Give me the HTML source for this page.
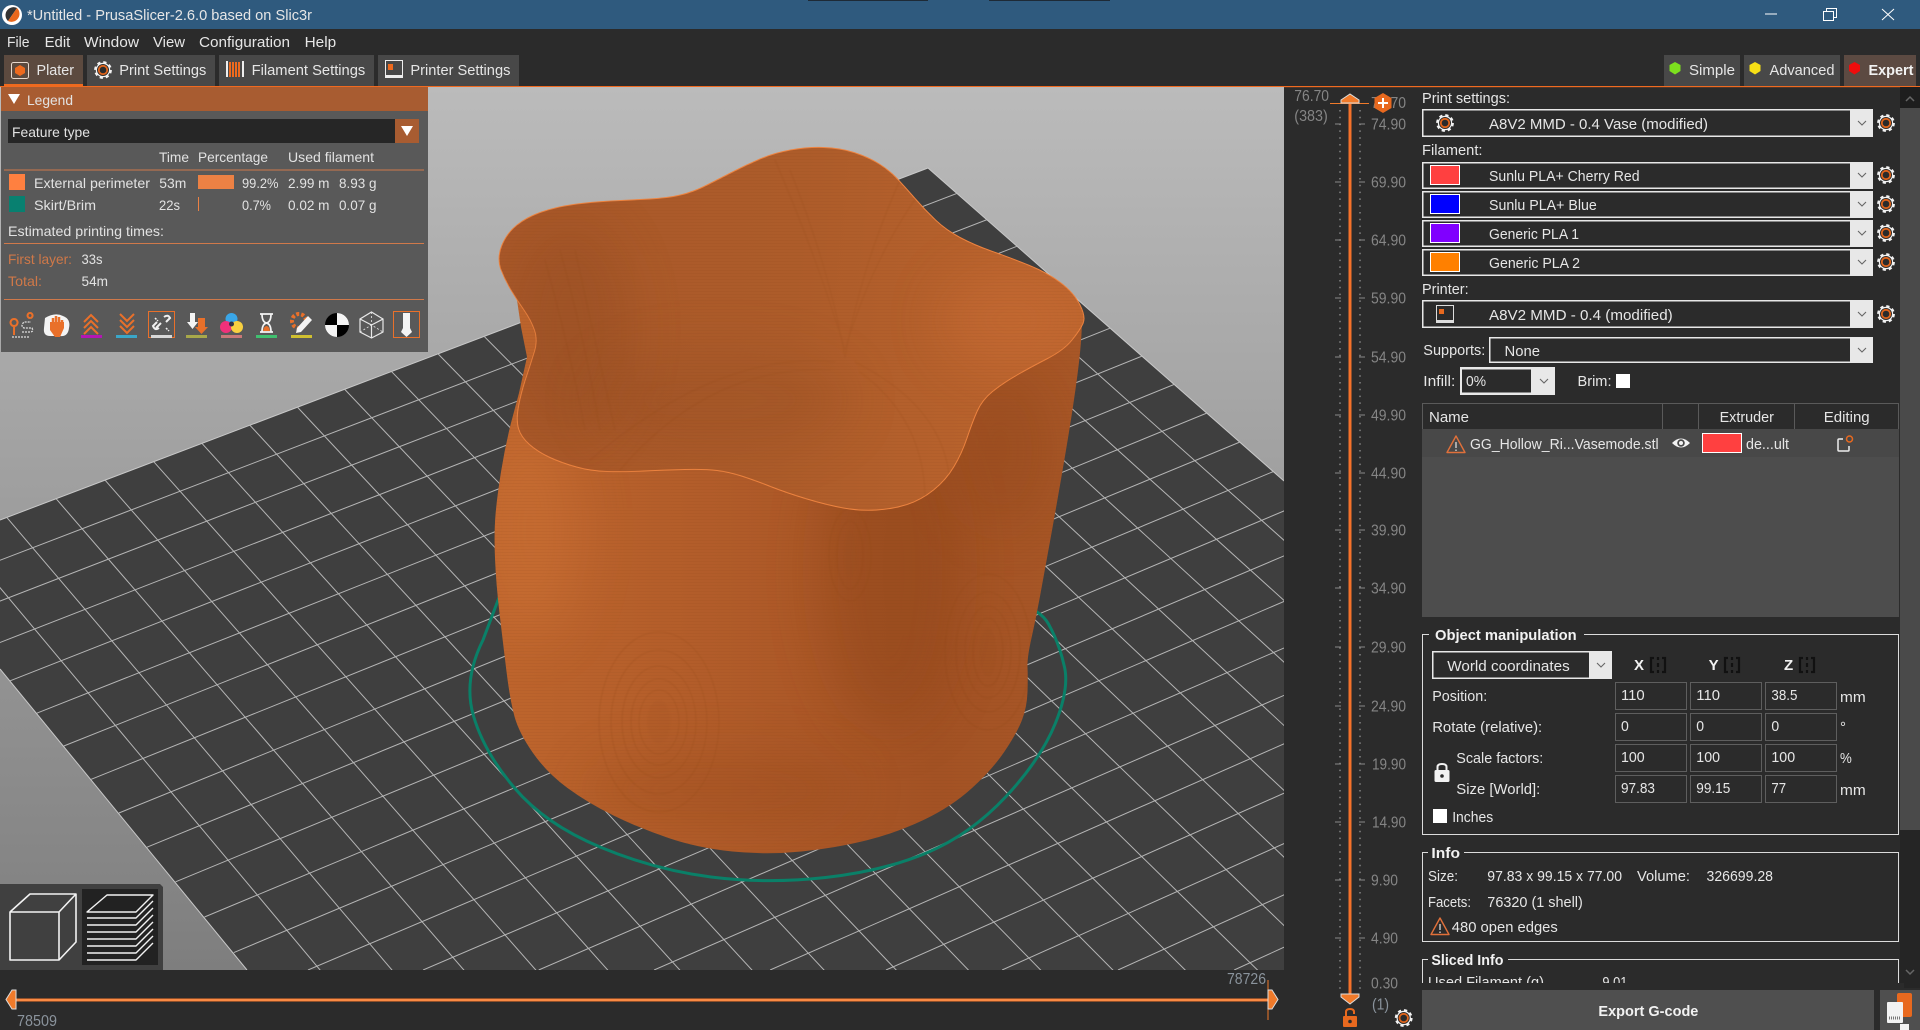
<!DOCTYPE html>
<html lang="en">
<head>
<meta charset="utf-8">
<title>PrusaSlicer</title>
<style>
html,body{margin:0;padding:0;background:#2b2b2b;width:1920px;height:1030px;overflow:hidden}
svg{display:block}
text{font-family:"Liberation Sans",sans-serif;font-size:15px;fill:#e6e6e6;white-space:pre}
.l text{font-size:14px;fill:#e2e2e2}
.r text{font-size:15.5px;fill:#858585}
.b{font-weight:700;fill:#f2f2f2}
</style>
</head>
<body>
<svg width="1920" height="1030" viewBox="0 0 1920 1030" xmlns="http://www.w3.org/2000/svg">
<defs>
<linearGradient id="bg" x1="0" y1="87" x2="0" y2="970" gradientUnits="userSpaceOnUse"><stop offset="0" stop-color="#bbbbbb"/><stop offset="1" stop-color="#7e7e7e"/></linearGradient>
<linearGradient id="body" x1="494" y1="0" x2="1082" y2="0" gradientUnits="userSpaceOnUse"><stop offset="0" stop-color="#be652d"/><stop offset=".42" stop-color="#b05b29"/><stop offset=".75" stop-color="#a35224"/><stop offset="1" stop-color="#a85727"/></linearGradient>
<linearGradient id="inner" x1="500" y1="300" x2="1080" y2="350" gradientUnits="userSpaceOnUse"><stop offset="0" stop-color="#a95829"/><stop offset=".5" stop-color="#ad5c2a"/><stop offset="1" stop-color="#bd652e"/></linearGradient>
<pattern id="fine" width="3" height="3" patternUnits="userSpaceOnUse"><path d="M0 0H3" stroke="#7a3d14" stroke-width="1" opacity=".16"/></pattern>
<filter id="soft" x="-60%" y="-60%" width="220%" height="220%"><feGaussianBlur stdDeviation="26"/></filter>
<filter id="lite" x="-10%" y="-10%" width="120%" height="120%"><feGaussianBlur stdDeviation=".6"/></filter>
<clipPath id="cv"><rect x="0" y="87" width="1284" height="883"/></clipPath>
<clipPath id="bed"><polygon points="0,520 928,168 1284,481 1284,970 247,970 0,669"/></clipPath>
<clipPath id="bd"><path d="M517 300L521 327L527 357L519 393L511 423Q505 447 501 472Q497 497 495.5 515Q494 533 495 558Q496 583 499.5 613Q503 643 506.5 671.5Q510 700 514.5 716.5Q519 733 533 753Q547 773 567.5 788Q588 803 613.5 815.5Q639 828 668.5 838Q698 848 732.5 851.500Q767 855 801.5 851.500Q836 848 866 840.5Q896 833 923.5 820Q951 807 971.5 788.5Q992 770 1004.5 751.5Q1017 733 1022 720Q1027 707 1027.5 692Q1028 677 1027.5 667.5Q1027 658 1031.5 638Q1036 618 1039.5 599Q1043 580 1050 541.5Q1057 503 1065 456Q1073 409 1077.5 374.5Q1082 340 1082 317L800 300Z"/></clipPath>
<clipPath id="rm"><path d="M500.500 268.500Q497 257 502 245Q507 233 517 225Q527 217 541.5 212Q556 207 573.5 204.5Q591 202 611 201Q631 200 649.5 199Q668 198 680.5 195Q693 192 705 186Q717 180 731.5 172.5Q746 165 760 159Q774 153 790.5 150Q807 147 823.5 147.5Q840 148 854 152.5Q868 157 878.5 163.5Q889 170 897 178.5Q905 187 915 198.5Q925 210 935.5 220Q946 230 960 237.5Q974 245 992.5 251.5Q1011 258 1029.5 265.5Q1048 273 1061 283Q1074 293 1080 305Q1086 317 1083 323.5Q1080 330 1072 340Q1064 350 1047.5 358.5Q1031 367 1017 375Q1003 383 992.5 391.5Q982 400 977 411.5Q972 423 967 438Q962 453 954 466.5Q946 480 933.5 490Q921 500 907 504.5Q893 509 876.5 510Q860 511 843.5 508Q827 505 807 499Q787 493 770.5 486.5Q754 480 741.5 476Q729 472 717 470.5Q705 469 684.5 469.5Q664 470 643.5 471Q623 472 607 471.5Q591 471 576.5 467Q562 463 550 457.5Q538 452 529.5 444.5Q521 437 518.5 428.5Q516 420 518.5 406.5Q521 393 526 378Q531 363 534.5 351.5Q538 340 534.5 330Q531 320 524 310Q517 300 511 290Q505 280 500.500 268.500Z"/></clipPath>
<clipPath id="sl"><rect x="1422" y="955" width="478" height="28"/></clipPath>
<g id="gear"><circle r="7.7" fill="none" stroke="#f2f2f2" stroke-width="2.4" stroke-dasharray="3.2 2.85"/><circle r="6.6" fill="#2b2b2b" stroke="#f2f2f2" stroke-width="1.2"/><circle r="4.2" fill="none" stroke="#e0651c" stroke-width="1.8"/></g>
<g id="chev"><polyline points="-4,-2 0,2 4,-2" fill="none" stroke="#666" stroke-width="1.1"/></g>
<g id="warn"><path d="M0 -9L9 7.5H-9Z" fill="none" stroke="#e0703a" stroke-width="1.4" stroke-linejoin="round"/><path d="M0 -3V3M0 4.5V6" stroke="#e9e9e9" stroke-width="1.2"/></g>
<g id="sync"><path d="M-4 -7H-7V7H-4M4 -7H7V7H4M0 -8V-5M0 -2V2M0 5V8" fill="none" stroke="#111" stroke-width="2.2"/></g>
</defs>

<!-- chrome -->
<rect width="1920" height="1030" fill="#2b2b2b"/>
<rect width="1920" height="29" fill="#2f5a7e"/>
<rect x="808" y="0" width="120" height="1" fill="#1e2a36"/><rect x="989" y="0" width="121" height="1" fill="#1e2a36"/>
<circle cx="12" cy="15" r="10" fill="#fff"/><path d="M17 8L8 21A8 8 0 0 1 17 8Z" fill="#333"/><path d="M17 8A8 8 0 0 1 8 21Z" fill="#e9671c"/>
<text x="27" y="20" textLength="285" lengthAdjust="spacingAndGlyphs">*Untitled - PrusaSlicer-2.6.0 based on Slic3r</text>
<path d="M1765 14H1777" stroke="#fff" stroke-width="1"/>
<path d="M1823.500 11.500h10v9h-10zM1826.500 11.500v-3h10v9h-3" fill="none" stroke="#fff" stroke-width="1"/>
<path d="M1882 9L1894 20M1894 9L1882 20" stroke="#fff" stroke-width="1"/>

<text x="7" y="47" textLength="22.500" lengthAdjust="spacingAndGlyphs">File</text>
<text x="44.600" y="47" textLength="25.700" lengthAdjust="spacingAndGlyphs">Edit</text>
<text x="84" y="47" textLength="55" lengthAdjust="spacingAndGlyphs">Window</text>
<text x="153" y="47" textLength="32" lengthAdjust="spacingAndGlyphs">View</text>
<text x="199" y="47" textLength="91" lengthAdjust="spacingAndGlyphs">Configuration</text>
<text x="304.600" y="47" textLength="31.600" lengthAdjust="spacingAndGlyphs">Help</text>

<!-- tabs -->
<rect x="4" y="55" width="79" height="31" fill="#5c4a3f"/><rect x="4" y="84" width="79" height="2" fill="#ee6a1e"/>
<rect x="87" y="55" width="128" height="31" fill="#484848"/>
<rect x="219" y="55" width="155" height="31" fill="#484848"/>
<rect x="378" y="55" width="141" height="31" fill="#484848"/>
<rect x="11.500" y="62.500" width="17" height="16" rx="2" fill="#5c4a3f" stroke="#e8d8cc" stroke-width="1"/><path d="M20 65L25 68V73L20 76L15 73V68Z" fill="#ee6a1e"/>
<text x="36.500" y="75" textLength="37.500" lengthAdjust="spacingAndGlyphs">Plater</text>
<use href="#gear" x="103" y="70"/>
<text x="119.300" y="75" textLength="87" lengthAdjust="spacingAndGlyphs">Print Settings</text>
<path d="M227 61V77M243 61V77" stroke="#eee" stroke-width="2"/><path d="M230 62V77M233 62V77M236 62V77M239 62V77" stroke="#ee6a1e" stroke-width="2"/>
<text x="251.600" y="75" textLength="113.700" lengthAdjust="spacingAndGlyphs">Filament Settings</text>
<rect x="385.500" y="60.500" width="17" height="17" fill="none" stroke="#eee" stroke-width="1"/><rect x="385" y="75" width="18" height="3" fill="#eee"/><rect x="388" y="64" width="5" height="6" fill="#ee6a1e"/>
<text x="410.400" y="75" textLength="100" lengthAdjust="spacingAndGlyphs">Printer Settings</text>

<rect x="1664" y="55" width="76" height="31" fill="#484848"/>
<rect x="1744" y="55" width="96" height="31" fill="#484848"/>
<rect x="1844" y="55" width="72" height="31" fill="#5c4a42"/>
<path d="M1675 62L1680.500 65V71L1675 74.500L1669.500 71V65Z" fill="#7ce01e"/>
<path d="M1755 62L1760.500 65V71L1755 74.500L1749.500 71V65Z" fill="#f8e016"/>
<path d="M1854.500 62L1860 65V71L1854.500 74.500L1849 71V65Z" fill="#f00c0c"/>
<text x="1689" y="75" textLength="46" lengthAdjust="spacingAndGlyphs">Simple</text>
<text x="1769.500" y="75" textLength="65" lengthAdjust="spacingAndGlyphs">Advanced</text>
<text x="1868.500" y="75" textLength="45" lengthAdjust="spacingAndGlyphs" class="b">Expert</text>
<rect y="86" width="1920" height="1.200" fill="#f06a20"/>

<!-- 3D canvas -->
<g clip-path="url(#cv)">
<rect x="0" y="87" width="1284" height="883" fill="url(#bg)"/>
<polygon points="0,520 928,168 1284,481 1284,970 247,970 0,669" fill="#3f3f3f"/>
<path d="M0 520L928 168L1284 481M0 669L247 970" fill="none" stroke="#c8c8c8" stroke-width="1"/>
<g clip-path="url(#bed)" stroke="#b5b5b5" stroke-width="1" fill="none">
<path d="M-43 536.300L345.200 1000M6.800 517.400L417.500 1000M56.100 498.700L489.800 1000M105 480.100L562.200 1000M153.600 461.600L634.500 1000M201.900 443.300L707 1000M249.800 425.100L779.600 1000M297.300 407L852.100 1000M344.500 389.100L924.700 1000M391.300 371.300L997.300 1000M437.800 353.600L1070 1000M483.900 336.100L1142.600 1000M529.800 318.700L1215.400 1000M575.200 301.400L1288.100 1000M620.400 284.200L1361 1000M665.200 267.200L1433.800 1000M709.800 250.300L1506.700 1000M754 233.500L1579.700 1000M797.900 216.800L1652.700 1000M841.500 200.200L1725.800 1000M884.800 183.800L1798.800 1000"/>
<path d="M-67.700 586.200L1300 61.900M-42.100 617.300L1300 98.700M-16.200 648.800L1300 136M10.100 680.800L1300 174.100M36.800 713.200L1300 212.900M63.800 746L1300 252.300M91.200 779.300L1300 292.500M118.900 813L1300 333.300M147 847.200L1300 374.900M175.600 881.800L1300 417.200M204.500 917L1300 460.400M233.800 952.600L1300 504.200M308 970L1300 549.100M423.100 970L1300 594.600M538.700 970L1300 641.100M654.100 970L1300 688.400M770.100 970L1300 736.800M886 970L1300 786.100M1002.100 970L1300 836.400M1118 970L1300 887.600M1234.200 970L1300 939.900"/>
</g>
<!-- skirt -->
<path d="M500 595L483 640Q463 680 473.500 716Q484 752 514.500 788Q545 824 600 847Q655 870 711 877Q767 884 825.500 877.500Q884 871 927.500 852.500Q971 834 1006 796.500Q1041 759 1055.500 723Q1070 687 1064 665Q1059 643 1048.500 624Q1038 605 1000 600" fill="none" stroke="#0a8068" stroke-width="3"/>
<!-- vase body -->
<path d="M517 300L521 327L527 357L519 393L511 423Q505 447 501 472Q497 497 495.5 515Q494 533 495 558Q496 583 499.5 613Q503 643 506.5 671.5Q510 700 514.5 716.5Q519 733 533 753Q547 773 567.5 788Q588 803 613.5 815.5Q639 828 668.5 838Q698 848 732.5 851.500Q767 855 801.5 851.500Q836 848 866 840.5Q896 833 923.5 820Q951 807 971.5 788.5Q992 770 1004.5 751.5Q1017 733 1022 720Q1027 707 1027.5 692Q1028 677 1027.5 667.5Q1027 658 1031.5 638Q1036 618 1039.5 599Q1043 580 1050 541.5Q1057 503 1065 456Q1073 409 1077.5 374.5Q1082 340 1082 317L800 300Z" fill="url(#body)"/>
<g clip-path="url(#bd)">
<ellipse cx="890" cy="570" rx="70" ry="160" fill="#8a4316" opacity=".38" filter="url(#soft)"/>
<ellipse cx="1000" cy="450" rx="50" ry="80" fill="#8a4316" opacity=".3" filter="url(#soft)"/>
<ellipse cx="530" cy="530" rx="50" ry="110" fill="#d27639" opacity=".4" filter="url(#soft)"/>
<ellipse cx="720" cy="790" rx="140" ry="40" fill="#8a4316" opacity=".22" filter="url(#soft)"/>
<g fill="none" stroke="#8c4718" stroke-width="1" opacity=".2" filter="url(#lite)">
<ellipse cx="659" cy="722" rx="12" ry="22" fill="#a85828" stroke="none"/>
<ellipse cx="659" cy="722" rx="20" ry="32"/><ellipse cx="659" cy="722" rx="28" ry="43"/><ellipse cx="659" cy="722" rx="37" ry="56"/><ellipse cx="659" cy="722" rx="48" ry="72"/><ellipse cx="659" cy="722" rx="60" ry="90"/>
<ellipse cx="988" cy="652" rx="8" ry="24" fill="#9a4f22" stroke="none"/>
<ellipse cx="988" cy="652" rx="15" ry="34"/><ellipse cx="988" cy="652" rx="23" ry="46"/><ellipse cx="988" cy="652" rx="32" ry="60"/><ellipse cx="988" cy="652" rx="43" ry="78"/>
<ellipse cx="850" cy="555" rx="6" ry="24" fill="#9a4f22" stroke="none"/><ellipse cx="850" cy="555" rx="13" ry="34"/><ellipse cx="850" cy="555" rx="21" ry="46"/>
</g>
</g>
<path d="M517 300L521 327L527 357L519 393L511 423Q505 447 501 472Q497 497 495.5 515Q494 533 495 558Q496 583 499.5 613Q503 643 506.5 671.5Q510 700 514.5 716.5Q519 733 533 753Q547 773 567.5 788Q588 803 613.5 815.5Q639 828 668.5 838Q698 848 732.5 851.500Q767 855 801.5 851.500Q836 848 866 840.5Q896 833 923.5 820Q951 807 971.5 788.5Q992 770 1004.5 751.5Q1017 733 1022 720Q1027 707 1027.5 692Q1028 677 1027.5 667.5Q1027 658 1031.5 638Q1036 618 1039.5 599Q1043 580 1050 541.5Q1057 503 1065 456Q1073 409 1077.5 374.5Q1082 340 1082 317L800 300Z" fill="url(#fine)"/>
<!-- vase interior -->
<path d="M500.500 268.500Q497 257 502 245Q507 233 517 225Q527 217 541.5 212Q556 207 573.5 204.5Q591 202 611 201Q631 200 649.5 199Q668 198 680.5 195Q693 192 705 186Q717 180 731.5 172.5Q746 165 760 159Q774 153 790.5 150Q807 147 823.5 147.5Q840 148 854 152.5Q868 157 878.5 163.5Q889 170 897 178.5Q905 187 915 198.5Q925 210 935.5 220Q946 230 960 237.5Q974 245 992.5 251.5Q1011 258 1029.5 265.5Q1048 273 1061 283Q1074 293 1080 305Q1086 317 1083 323.5Q1080 330 1072 340Q1064 350 1047.5 358.5Q1031 367 1017 375Q1003 383 992.5 391.5Q982 400 977 411.5Q972 423 967 438Q962 453 954 466.5Q946 480 933.5 490Q921 500 907 504.5Q893 509 876.5 510Q860 511 843.5 508Q827 505 807 499Q787 493 770.5 486.5Q754 480 741.5 476Q729 472 717 470.5Q705 469 684.5 469.5Q664 470 643.5 471Q623 472 607 471.5Q591 471 576.5 467Q562 463 550 457.5Q538 452 529.5 444.5Q521 437 518.5 428.5Q516 420 518.5 406.5Q521 393 526 378Q531 363 534.5 351.5Q538 340 534.5 330Q531 320 524 310Q517 300 511 290Q505 280 500.500 268.500Z" fill="url(#inner)" stroke="#ee8440" stroke-width="1"/>
<g clip-path="url(#rm)">
<ellipse cx="570" cy="330" rx="60" ry="110" fill="#8c4a20" opacity=".32" filter="url(#soft)"/>
<ellipse cx="720" cy="400" rx="130" ry="50" fill="#8f4b20" opacity=".25" filter="url(#soft)"/>
<ellipse cx="1010" cy="320" rx="70" ry="50" fill="#d2723a" opacity=".35" filter="url(#soft)"/>
<g fill="none" stroke="#8c4718" stroke-width="1" opacity=".14" filter="url(#lite)">
<path d="M845 358Q830 270 790 170M845 358Q860 270 900 180M835 362Q720 350 590 460M855 362Q950 410 950 490M600 430Q585 340 560 250M585 430Q570 350 545 260M615 430Q595 340 575 250"/>
<path d="M845 350Q818 260 775 160M845 350Q872 260 918 195M830 370Q710 365 620 470M860 372Q925 420 925 500"/>
</g>
</g>
<path d="M500.500 268.500Q497 257 502 245Q507 233 517 225Q527 217 541.5 212Q556 207 573.5 204.5Q591 202 611 201Q631 200 649.5 199Q668 198 680.5 195Q693 192 705 186Q717 180 731.5 172.5Q746 165 760 159Q774 153 790.5 150Q807 147 823.5 147.5Q840 148 854 152.5Q868 157 878.5 163.5Q889 170 897 178.5Q905 187 915 198.5Q925 210 935.5 220Q946 230 960 237.5Q974 245 992.5 251.5Q1011 258 1029.5 265.5Q1048 273 1061 283Q1074 293 1080 305Q1086 317 1083 323.5Q1080 330 1072 340Q1064 350 1047.5 358.5Q1031 367 1017 375Q1003 383 992.5 391.5Q982 400 977 411.5Q972 423 967 438Q962 453 954 466.5Q946 480 933.5 490Q921 500 907 504.5Q893 509 876.5 510Q860 511 843.5 508Q827 505 807 499Q787 493 770.5 486.5Q754 480 741.5 476Q729 472 717 470.5Q705 469 684.5 469.5Q664 470 643.5 471Q623 472 607 471.5Q591 471 576.5 467Q562 463 550 457.5Q538 452 529.5 444.5Q521 437 518.5 428.5Q516 420 518.5 406.5Q521 393 526 378Q531 363 534.5 351.5Q538 340 534.5 330Q531 320 524 310Q517 300 511 290Q505 280 500.500 268.500Z" fill="url(#fine)"/>

<!-- view toolbar -->
<path d="M0 884H160L163 887V970H0Z" fill="#404040"/>
<rect x="82" y="889" width="76" height="76" fill="#222"/>
<path d="M10 912H59V960H10ZM10 912L30 894H76L59 912M76 894V942L59 960" fill="none" stroke="#f2f2f2" stroke-width="1.600" stroke-linejoin="round"/>
<path d="M87 912L107 895H153L136 912ZM87 918H136L153 901M87 925H136L153 908M87 932H136L153 915M87 939H136L153 922M87 946H136L153 929M87 953H136L153 936M87 960H136L153 943" fill="none" stroke="#f2f2f2" stroke-width="1.400" stroke-linejoin="round"/>
</g>

<!-- legend -->
<g class="l">
<rect x="1" y="87" width="427" height="265" fill="#595959"/>
<rect x="1" y="87" width="427" height="24" fill="#a85c31"/>
<path d="M8 94H20L14 104Z" fill="#fff"/>
<text x="27" y="105" textLength="46" lengthAdjust="spacingAndGlyphs">Legend</text>
<rect x="8" y="119" width="411" height="24" fill="#262626"/><rect x="395" y="119" width="24" height="24" fill="#a85c31"/>
<path d="M401 126H413L407 136Z" fill="#fff"/>
<text x="12" y="137" textLength="78" lengthAdjust="spacingAndGlyphs">Feature type</text>
<text x="159" y="162" textLength="30" lengthAdjust="spacingAndGlyphs">Time</text>
<text x="198" y="162" textLength="70" lengthAdjust="spacingAndGlyphs">Percentage</text>
<text x="288" y="162" textLength="86" lengthAdjust="spacingAndGlyphs">Used filament</text>
<rect x="4" y="169.500" width="420" height="1" fill="#d0794a"/>
<rect x="9" y="174" width="16" height="16" fill="#ff8040"/>
<text x="34" y="188" textLength="116" lengthAdjust="spacingAndGlyphs">External perimeter</text>
<text x="159.300" y="188" textLength="27" lengthAdjust="spacingAndGlyphs">53m</text>
<rect x="198" y="175" width="36" height="14" fill="#ec8144"/>
<text x="242" y="188" textLength="36.500" lengthAdjust="spacingAndGlyphs">99.2%</text>
<text x="288" y="188" textLength="41.500" lengthAdjust="spacingAndGlyphs">2.99 m</text>
<text x="339" y="188" textLength="37.500" lengthAdjust="spacingAndGlyphs">8.93 g</text>
<rect x="9" y="196" width="16" height="16" fill="#088070"/>
<text x="34" y="210" textLength="62" lengthAdjust="spacingAndGlyphs">Skirt/Brim</text>
<text x="159" y="210" textLength="21" lengthAdjust="spacingAndGlyphs">22s</text>
<rect x="198" y="197" width="1" height="14" fill="#ec8144"/>
<text x="242" y="210" textLength="29" lengthAdjust="spacingAndGlyphs">0.7%</text>
<text x="288" y="210" textLength="41.500" lengthAdjust="spacingAndGlyphs">0.02 m</text>
<text x="339" y="210" textLength="37.500" lengthAdjust="spacingAndGlyphs">0.07 g</text>
<text x="8" y="236" textLength="156" lengthAdjust="spacingAndGlyphs">Estimated printing times:</text>
<rect x="4" y="243" width="420" height="1" fill="#d0794a"/>
<text x="8" y="264" textLength="64" lengthAdjust="spacingAndGlyphs" style="fill:#cf7848">First layer:</text>
<text x="81.500" y="264" textLength="21" lengthAdjust="spacingAndGlyphs">33s</text>
<text x="8" y="286" textLength="34" lengthAdjust="spacingAndGlyphs" style="fill:#cf7848">Total:</text>
<text x="81.500" y="286" textLength="26.500" lengthAdjust="spacingAndGlyphs">54m</text>
<rect x="4" y="299" width="420" height="1" fill="#d0794a"/>
<!-- legend tool icons -->
<g fill="none" stroke-width="2">
<path d="M14 326a3.500 3.500 0 1 1 0.100 0L14 335" stroke="#e9702a"/><path d="M30 318a2.500 2.500 0 1 1 .1 0" stroke="#e9702a"/><path d="M22 332H30Q34 332 32 328H24Q20 326 24 322H31M12 337H30" stroke="#ddd" stroke-width="1.300" stroke-dasharray="2 1"/>
<path d="M45 318Q55 312 63 316Q71 319 69 328Q68 337 60 336H50Q43 336 44 328Z" fill="#f4f4f4" stroke="none"/><path d="M50 322V330L55 337H60L64 328V322" fill="#e9702a" stroke="none"/><path d="M53 318V328M56 316V328M59 317V328M62 320V328" stroke="#e9702a" stroke-width="2.500"/>
<path d="M84 322L91 315L98 322M84 328L91 321L98 328M84 334L91 327L98 334" stroke="#e9702a"/>
<path d="M120 314L127 321L134 314M120 320L127 327L134 320M120 326L127 333L134 326" stroke="#e9702a"/>
<rect x="148.500" y="311.500" width="26" height="26" stroke="#e9702a" stroke-width="1"/>
<path d="M156 328L161 323M166 322L170 318Q168 314 164 317M157 322L153 326Q155 331 159 328" stroke="#f0f0f0"/>
<path d="M155 318L158 321M166 328L169 331" stroke="#f0f0f0" stroke-width="1.500" stroke-dasharray="2 1"/>
</g>
<path d="M190 313H195V322H198L192.500 329L187 322H190Z" fill="#f4f4f4"/><path d="M198 318H205V327H208L201.500 334L195 327H198Z" fill="#e9702a"/>
<circle cx="231.500" cy="319" r="6" fill="#3aa6e8"/><circle cx="226" cy="327" r="6" fill="#f0307a"/><circle cx="237" cy="327" r="6" fill="#f8d040"/><circle cx="231.500" cy="324" r="2.500" fill="#334"/>
<path d="M260 314H273M260 332H273M262 314Q262 322 266.500 323Q271 322 271 314M262 332Q262 324 266.500 323Q271 324 271 332" fill="none" stroke="#f4f4f4" stroke-width="1.700"/><path d="M263 331Q264 326 266.500 326Q269 326 270 331Z" fill="#e9702a"/>
<circle cx="299" cy="321" r="7" fill="none" stroke="#e9702a" stroke-width="4" stroke-dasharray="3 2"/><path d="M301 332L312 320L308 316L297 328L296 333Z" fill="#f4f4f4"/>
<circle cx="337" cy="325" r="12" fill="#000"/><path d="M337 313A12 12 0 0 1 349 325H337ZM337 325H325A12 12 0 0 0 337 337Z" fill="#f4f4f4"/>
<path d="M371.500 312L383 319V332L371.500 338L360 332V319ZM360 319L371.500 325L383 319M371.500 325V338" fill="none" stroke="#e8e8e8" stroke-width="1.200"/>
<path d="M371.500 312V325M360 332L371.500 325L383 332" fill="none" stroke="#e8e8e8" stroke-width=".8" stroke-dasharray="2 2"/>
<rect x="393.500" y="311.500" width="26" height="26" fill="none" stroke="#e9702a" stroke-width="1"/><path d="M403 313H410V328L412 332L406.500 337L401 332L403 328Z" fill="#f4f4f4"/>
<rect x="81" y="335" width="21" height="3" fill="#b416b4"/><rect x="116" y="335" width="21" height="3" fill="#3aa6c8"/><rect x="151" y="335" width="21" height="3" fill="#d8d8d8"/><rect x="186" y="335" width="21" height="3" fill="#a8a84a"/><rect x="221" y="335" width="21" height="3" fill="#c87878"/><rect x="256" y="335" width="21" height="3" fill="#40c070"/><rect x="291" y="335" width="21" height="3" fill="#d0c030"/>
</g>

<!-- horizontal slider -->
<rect x="16" y="998.500" width="1252" height="3" fill="#f57428"/><rect x="16" y="999.500" width="1252" height="1" fill="#ffa060"/>
<path d="M16 990V1009H12L6 999.500L12 990Z" fill="#f07a2a" stroke="#ddd" stroke-width="1"/>
<path d="M1268 980V1020" stroke="#f07a2a"/>
<path d="M1268 990V1009H1272L1278 999.500L1272 990Z" fill="#f07a2a" stroke="#ddd" stroke-width="1"/>
<g class="r"><text x="17" y="1026" textLength="40" lengthAdjust="spacingAndGlyphs" style="fill:#8a939c">78509</text>
<text x="1227" y="984" textLength="39" lengthAdjust="spacingAndGlyphs" style="fill:#8a939c">78726</text></g>

<!-- vertical slider -->
<g stroke="#858585" stroke-width="1.500" stroke-dasharray="1.500 5.300" fill="none"><path d="M1340 110V990M1360 110V990"/></g>
<path d="M1335 124h6M1359 124h6M1335 182h6M1359 182h6M1335 240h6M1359 240h6M1335 298h6M1359 298h6M1335 357h6M1359 357h6M1335 415h6M1359 415h6M1335 473h6M1359 473h6M1335 530h6M1359 530h6M1335 588h6M1359 588h6M1335 647h6M1359 647h6M1335 706h6M1359 706h6M1335 764h6M1359 764h6M1335 822h6M1359 822h6M1335 880h6M1359 880h6M1335 938h6M1359 938h6" stroke="#8a8a8a" stroke-width="1"/>
<rect x="1348.500" y="103" width="3" height="891" fill="#f5722a"/>
<path d="M1330 103.500H1369" stroke="#f07a2a" stroke-width="1"/>
<path d="M1341 103V100L1350 94L1359 100V103Z" fill="#f07a2a" stroke="#ddd" stroke-width="1"/>
<path d="M1341 994V997L1350 1004L1359 997V994Z" fill="#f07a2a" stroke="#ddd" stroke-width="1"/>
<g class="r">
<text x="1294.300" y="101" textLength="34.700" lengthAdjust="spacingAndGlyphs">76.70</text>
<text x="1294.300" y="121" textLength="33.500" lengthAdjust="spacingAndGlyphs">(383)</text>
<text x="1371" y="108" textLength="35" lengthAdjust="spacingAndGlyphs">76.70</text>
<text x="1371" y="129.500" textLength="35" lengthAdjust="spacingAndGlyphs">74.90</text>
<text x="1371" y="187.500" textLength="35" lengthAdjust="spacingAndGlyphs">69.90</text>
<text x="1371" y="245.500" textLength="35" lengthAdjust="spacingAndGlyphs">64.90</text>
<text x="1371" y="303.500" textLength="35" lengthAdjust="spacingAndGlyphs">59.90</text>
<text x="1371" y="362.500" textLength="35" lengthAdjust="spacingAndGlyphs">54.90</text>
<text x="1371" y="420.500" textLength="35" lengthAdjust="spacingAndGlyphs">49.90</text>
<text x="1371" y="478.500" textLength="35" lengthAdjust="spacingAndGlyphs">44.90</text>
<text x="1371" y="535.500" textLength="35" lengthAdjust="spacingAndGlyphs">39.90</text>
<text x="1371" y="593.500" textLength="35" lengthAdjust="spacingAndGlyphs">34.90</text>
<text x="1371" y="652.500" textLength="35" lengthAdjust="spacingAndGlyphs">29.90</text>
<text x="1371" y="711.500" textLength="35" lengthAdjust="spacingAndGlyphs">24.90</text>
<text x="1372" y="769.500" textLength="34" lengthAdjust="spacingAndGlyphs">19.90</text>
<text x="1372" y="827.500" textLength="34" lengthAdjust="spacingAndGlyphs">14.90</text>
<text x="1371" y="885.500" textLength="27" lengthAdjust="spacingAndGlyphs">9.90</text>
<text x="1371" y="943.500" textLength="27" lengthAdjust="spacingAndGlyphs">4.90</text>
<text x="1371" y="988.500" textLength="27" lengthAdjust="spacingAndGlyphs">0.30</text>
<text x="1372" y="1009.500" textLength="17" lengthAdjust="spacingAndGlyphs" style="fill:#8a939c">(1)</text>
</g>
<path d="M1383 93L1391.500 98V108L1383 113L1374.500 108V98Z" fill="#e8691f"/>
<path d="M1378 103H1388M1383 98V108" stroke="#fff" stroke-width="2"/>
<rect x="1343" y="1016" width="14" height="11" rx="1" fill="#e8691f"/>
<path d="M1346 1016V1012Q1346 1009 1350 1009Q1354 1009 1354 1012V1014" fill="none" stroke="#e8691f" stroke-width="2"/>
<circle cx="1350" cy="1021.500" r="1.800" fill="#2b2b2b"/>
<use href="#gear" x="1403.700" y="1018"/>

<!-- scrollbar -->
<rect x="1900" y="87" width="20" height="21" fill="#1e1e1e"/>
<path d="M1906 101L1910 97L1914 101" fill="none" stroke="#666" stroke-width="1.500"/>
<rect x="1900" y="108" width="20" height="722" fill="#4a4a4a"/>
<rect x="1900" y="830" width="20" height="158" fill="#252525"/>
<path d="M1906 970L1910 974L1914 970" fill="none" stroke="#666" stroke-width="1.500"/>

<!-- presets -->
<text x="1422" y="103" textLength="88" lengthAdjust="spacingAndGlyphs">Print settings:</text>
<rect x="1422" y="109" width="451" height="28" fill="#e8e8e8"/><rect x="1423.500" y="110.500" width="426.500" height="25" fill="#2b2b2b"/><use href="#chev" x="1862" y="123"/>
<use href="#gear" x="1445" y="123"/>
<text x="1489" y="129" textLength="219" lengthAdjust="spacingAndGlyphs">A8V2 MMD - 0.4 Vase (modified)</text>
<use href="#gear" x="1886" y="123"/>
<text x="1422" y="155" textLength="60.500" lengthAdjust="spacingAndGlyphs">Filament:</text>

<rect x="1422" y="162" width="451" height="27" fill="#e8e8e8"/><rect x="1423.500" y="163.500" width="426.500" height="24" fill="#2b2b2b"/><use href="#chev" x="1862" y="175"/>
<rect x="1430.500" y="165.500" width="29" height="19" fill="#ff4040" stroke="#fff"/>
<text x="1489" y="181" textLength="150.600" lengthAdjust="spacingAndGlyphs">Sunlu PLA+ Cherry Red</text><use href="#gear" x="1886" y="175"/>

<rect x="1422" y="191" width="451" height="27" fill="#e8e8e8"/><rect x="1423.500" y="192.500" width="426.500" height="24" fill="#2b2b2b"/><use href="#chev" x="1862" y="204"/>
<rect x="1430.500" y="194.500" width="29" height="19" fill="#0000ff" stroke="#fff"/>
<text x="1489" y="210" textLength="107.800" lengthAdjust="spacingAndGlyphs">Sunlu PLA+ Blue</text><use href="#gear" x="1886" y="204"/>

<rect x="1422" y="220" width="451" height="27" fill="#e8e8e8"/><rect x="1423.500" y="221.500" width="426.500" height="24" fill="#2b2b2b"/><use href="#chev" x="1862" y="233"/>
<rect x="1430.500" y="223.500" width="29" height="19" fill="#8000ff" stroke="#fff"/>
<text x="1489" y="239" textLength="90" lengthAdjust="spacingAndGlyphs">Generic PLA 1</text><use href="#gear" x="1886" y="233"/>

<rect x="1422" y="249" width="451" height="27" fill="#e8e8e8"/><rect x="1423.500" y="250.500" width="426.500" height="24" fill="#2b2b2b"/><use href="#chev" x="1862" y="262"/>
<rect x="1430.500" y="252.500" width="29" height="19" fill="#ff8000" stroke="#fff"/>
<text x="1489" y="268" textLength="91" lengthAdjust="spacingAndGlyphs">Generic PLA 2</text><use href="#gear" x="1886" y="262"/>

<text x="1422" y="294" textLength="46.600" lengthAdjust="spacingAndGlyphs">Printer:</text>
<rect x="1422" y="300" width="451" height="28" fill="#e8e8e8"/><rect x="1423.500" y="301.500" width="426.500" height="25" fill="#2b2b2b"/><use href="#chev" x="1862" y="314"/>
<rect x="1436.500" y="305.500" width="17" height="17" fill="none" stroke="#ddd"/><rect x="1436" y="320" width="18" height="3" fill="#ddd"/><rect x="1439" y="309" width="5" height="5" fill="#e8691f"/>
<text x="1489" y="320" textLength="183.700" lengthAdjust="spacingAndGlyphs">A8V2 MMD - 0.4 (modified)</text><use href="#gear" x="1886" y="314"/>

<text x="1423.300" y="355" textLength="62" lengthAdjust="spacingAndGlyphs">Supports:</text>
<rect x="1489" y="337" width="384" height="26" fill="#e8e8e8"/><rect x="1490.500" y="338.500" width="359.500" height="23" fill="#2b2b2b"/><use href="#chev" x="1862" y="350"/>
<text x="1504.500" y="356" textLength="35.500" lengthAdjust="spacingAndGlyphs">None</text>
<text x="1423.300" y="386" textLength="32" lengthAdjust="spacingAndGlyphs">Infill:</text>
<rect x="1460" y="367" width="95" height="28" fill="#e8e8e8"/><rect x="1462" y="369.500" width="69" height="23" fill="#2b2b2b"/><use href="#chev" x="1544" y="381"/>
<text x="1466" y="386" textLength="20" lengthAdjust="spacingAndGlyphs">0%</text>
<text x="1577.500" y="386" textLength="34" lengthAdjust="spacingAndGlyphs">Brim:</text>
<rect x="1616" y="374" width="14" height="14" fill="#fff"/>

<!-- object list -->
<rect x="1422" y="403" width="477" height="214" fill="#4d4d4d"/>
<rect x="1422" y="403" width="477" height="26" fill="#2b2b2b"/>
<rect x="1422" y="429" width="477" height="28" fill="#484848"/>
<path d="M1422.500 429V403.500H1898.500V429M1662.500 403V429M1698.500 403V429M1794.500 403V429" fill="none" stroke="#5a5a5a"/>
<text x="1429" y="422" textLength="40" lengthAdjust="spacingAndGlyphs">Name</text>
<text x="1719.600" y="422" textLength="54.300" lengthAdjust="spacingAndGlyphs">Extruder</text>
<text x="1823.700" y="422" textLength="46" lengthAdjust="spacingAndGlyphs">Editing</text>
<use href="#warn" x="1456" y="445"/>
<text x="1470" y="449" textLength="188.600" lengthAdjust="spacingAndGlyphs">GG_Hollow_Ri...Vasemode.stl</text>
<path d="M1672 443Q1681 434 1690 443Q1681 452 1672 443Z" fill="#f2f2f2"/><circle cx="1681" cy="443" r="3.800" fill="#484848"/><circle cx="1681" cy="443" r="2" fill="#f2f2f2"/>
<rect x="1702.500" y="433.500" width="39" height="19" fill="#ff4040" stroke="#fff"/>
<text x="1746" y="449" textLength="43" lengthAdjust="spacingAndGlyphs">de...ult</text>
<path d="M1838 440V450Q1838 451 1839 451H1848Q1849 451 1849 450V446M1838 440Q1838 439 1839 439H1843" fill="none" stroke="#ededed" stroke-width="1.500"/>
<circle cx="1849.500" cy="439" r="3" fill="none" stroke="#e8691f" stroke-width="1.500"/>

<!-- Object manipulation -->
<rect x="1422.500" y="634.500" width="476" height="200" fill="none" stroke="#dcdcdc"/>
<rect x="1429" y="625" width="155" height="20" fill="#2b2b2b"/>
<text x="1435" y="640" textLength="141.600" lengthAdjust="spacingAndGlyphs" class="b">Object manipulation</text>
<rect x="1432" y="651" width="180" height="28" fill="#e8e8e8"/><rect x="1433.500" y="652.500" width="155.500" height="25" fill="#2b2b2b"/><use href="#chev" x="1601" y="665"/>
<text x="1447.300" y="671" textLength="122.400" lengthAdjust="spacingAndGlyphs">World coordinates</text>
<text x="1634" y="670" class="b">X</text><use href="#sync" x="1658" y="665"/>
<text x="1708.600" y="670" class="b">Y</text><use href="#sync" x="1732" y="665"/>
<text x="1784" y="670" class="b">Z</text><use href="#sync" x="1807" y="665"/>

<g fill="none" stroke="#5e5e5e">
<rect x="1615.500" y="682.500" width="71" height="27"/><rect x="1690.500" y="682.500" width="71" height="27"/><rect x="1765.500" y="682.500" width="71" height="27"/>
<rect x="1615.500" y="713.500" width="71" height="27"/><rect x="1690.500" y="713.500" width="71" height="27"/><rect x="1765.500" y="713.500" width="71" height="27"/>
<rect x="1615.500" y="744.500" width="71" height="27"/><rect x="1690.500" y="744.500" width="71" height="27"/><rect x="1765.500" y="744.500" width="71" height="27"/>
<rect x="1615.500" y="775.500" width="71" height="27"/><rect x="1690.500" y="775.500" width="71" height="27"/><rect x="1765.500" y="775.500" width="71" height="27"/>
</g>
<text x="1432.200" y="701" textLength="55" lengthAdjust="spacingAndGlyphs">Position:</text>
<text x="1432.200" y="732" textLength="110" lengthAdjust="spacingAndGlyphs">Rotate (relative):</text>
<text x="1456.300" y="763" textLength="87" lengthAdjust="spacingAndGlyphs">Scale factors:</text>
<text x="1456.300" y="794" textLength="84" lengthAdjust="spacingAndGlyphs">Size [World]:</text>
<text x="1621" y="700" textLength="23.700" lengthAdjust="spacingAndGlyphs">110</text><text x="1696.300" y="700" textLength="23.700" lengthAdjust="spacingAndGlyphs">110</text><text x="1771.400" y="700" textLength="26" lengthAdjust="spacingAndGlyphs">38.5</text>
<text x="1621" y="731" textLength="7.800" lengthAdjust="spacingAndGlyphs">0</text><text x="1696.300" y="731" textLength="7.800" lengthAdjust="spacingAndGlyphs">0</text><text x="1771.400" y="731" textLength="7.800" lengthAdjust="spacingAndGlyphs">0</text>
<text x="1621" y="762" textLength="23.700" lengthAdjust="spacingAndGlyphs">100</text><text x="1696.300" y="762" textLength="23.700" lengthAdjust="spacingAndGlyphs">100</text><text x="1771.400" y="762" textLength="23.700" lengthAdjust="spacingAndGlyphs">100</text>
<text x="1621" y="793" textLength="34" lengthAdjust="spacingAndGlyphs">97.83</text><text x="1696.300" y="793" textLength="34" lengthAdjust="spacingAndGlyphs">99.15</text><text x="1771.400" y="793" textLength="14.700" lengthAdjust="spacingAndGlyphs">77</text>
<text x="1840" y="702" textLength="25.700" lengthAdjust="spacingAndGlyphs">mm</text>
<text x="1840" y="732">°</text>
<text x="1840" y="763" textLength="11.800" lengthAdjust="spacingAndGlyphs">%</text>
<text x="1840" y="795" textLength="25.700" lengthAdjust="spacingAndGlyphs">mm</text>
<rect x="1434.500" y="770" width="15" height="12" rx="1.500" fill="#f2f2f2"/><path d="M1437.500 770V767Q1437.500 764 1442 764Q1446.500 764 1446.500 767V770" fill="none" stroke="#f2f2f2" stroke-width="2"/><circle cx="1442" cy="776" r="1.800" fill="#2b2b2b"/>
<rect x="1433" y="809" width="14" height="14" fill="#fff"/>
<text x="1452.200" y="822" textLength="41" lengthAdjust="spacingAndGlyphs">Inches</text>

<!-- Info -->
<rect x="1422.500" y="852.500" width="476" height="89" fill="none" stroke="#dcdcdc"/>
<rect x="1428" y="845" width="36" height="16" fill="#2b2b2b"/>
<text x="1431.400" y="858" textLength="28.600" lengthAdjust="spacingAndGlyphs" class="b">Info</text>
<text x="1428" y="881" textLength="30" lengthAdjust="spacingAndGlyphs">Size:</text>
<text x="1487.300" y="881" textLength="134.700" lengthAdjust="spacingAndGlyphs">97.83 x 99.15 x 77.00</text>
<text x="1637" y="881" textLength="53" lengthAdjust="spacingAndGlyphs">Volume:</text>
<text x="1706.500" y="881" textLength="66.500" lengthAdjust="spacingAndGlyphs">326699.28</text>
<text x="1428" y="907" textLength="43" lengthAdjust="spacingAndGlyphs">Facets:</text>
<text x="1487.300" y="907" textLength="95.500" lengthAdjust="spacingAndGlyphs">76320 (1 shell)</text>
<use href="#warn" x="1440" y="927"/>
<text x="1451.800" y="932" textLength="106" lengthAdjust="spacingAndGlyphs">480 open edges</text>

<!-- Sliced info -->
<path d="M1422.500 990V959.500H1898.500V990" fill="none" stroke="#dcdcdc"/>
<rect x="1428" y="952" width="80" height="16" fill="#2b2b2b"/>
<text x="1431.400" y="965" textLength="72" lengthAdjust="spacingAndGlyphs" class="b">Sliced Info</text>
<rect x="1418" y="983" width="486" height="7" fill="#2b2b2b"/>
<g clip-path="url(#sl)">
<text x="1428" y="987" textLength="116" lengthAdjust="spacingAndGlyphs">Used Filament (g)</text>
<text x="1602.400" y="987" textLength="25" lengthAdjust="spacingAndGlyphs">9.01</text>
</g>

<!-- export -->
<rect x="1422" y="990" width="452" height="40" fill="#4f4f4f"/>
<text x="1598.400" y="1016" textLength="100" lengthAdjust="spacingAndGlyphs" class="b">Export G-code</text>
<rect x="1880" y="990" width="40" height="40" fill="#4f4f4f"/>
<rect x="1897" y="993" width="15" height="24" rx="2" fill="#e8691f"/>
<rect x="1887" y="1002" width="16" height="21" rx="1" fill="#f2f2f2"/>
<path d="M1889 1018h11" stroke="#777" stroke-width="3" stroke-dasharray="1 1"/>
<rect x="1900" y="1024" width="9" height="6" fill="#f2f2f2"/>
</svg>
</body>
</html>
